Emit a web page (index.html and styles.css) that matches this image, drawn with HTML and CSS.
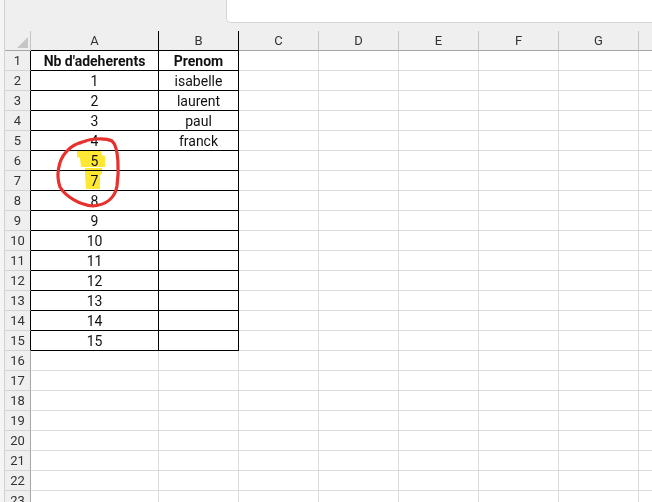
FILE: index.html
```html
<!DOCTYPE html>
<html>
<head>
    <meta charset="UTF-8">
    <meta name="viewport" content="width=device-width, initial-scale=1.0">
    <title>Classeur - Adherents</title>
    <link rel="stylesheet" href="styles.css">
</head>
<body>
    <div class="app">
        <div class="edge"></div>
        <div class="main">
            <div class="topbar">
                <div class="formula"></div>
            </div>

            <table class="sheet">
                <tr class="heads">
                    <td class="corner"></td>
                    <td class="ch colA k">A</td>
                    <td class="ch k">B</td>
                    <td class="ch">C</td>
                    <td class="ch">D</td>
                    <td class="ch">E</td>
                    <td class="ch">F</td>
                    <td class="ch">G</td>
                    <td class="ch"></td>
                </tr>
                <tr><td class="rh k">1</td><td class="k bold">Nb d'adeherents</td><td class="k bold">Prenom</td><td></td><td></td><td></td><td></td><td></td><td></td></tr>
                <tr><td class="rh k">2</td><td class="k">1</td><td class="k">isabelle</td><td></td><td></td><td></td><td></td><td></td><td></td></tr>
                <tr><td class="rh k">3</td><td class="k">2</td><td class="k">laurent</td><td></td><td></td><td></td><td></td><td></td><td></td></tr>
                <tr><td class="rh k">4</td><td class="k">3</td><td class="k">paul</td><td></td><td></td><td></td><td></td><td></td><td></td></tr>
                <tr><td class="rh k">5</td><td class="k">4</td><td class="k">franck</td><td></td><td></td><td></td><td></td><td></td><td></td></tr>
                <tr><td class="rh k">6</td><td class="k">5</td><td class="k"></td><td></td><td></td><td></td><td></td><td></td><td></td></tr>
                <tr><td class="rh k">7</td><td class="k">7</td><td class="k"></td><td></td><td></td><td></td><td></td><td></td><td></td></tr>
                <tr><td class="rh k">8</td><td class="k">8</td><td class="k"></td><td></td><td></td><td></td><td></td><td></td><td></td></tr>
                <tr><td class="rh k">9</td><td class="k">9</td><td class="k"></td><td></td><td></td><td></td><td></td><td></td><td></td></tr>
                <tr><td class="rh k">10</td><td class="k">10</td><td class="k"></td><td></td><td></td><td></td><td></td><td></td><td></td></tr>
                <tr><td class="rh k">11</td><td class="k">11</td><td class="k"></td><td></td><td></td><td></td><td></td><td></td><td></td></tr>
                <tr><td class="rh k">12</td><td class="k">12</td><td class="k"></td><td></td><td></td><td></td><td></td><td></td><td></td></tr>
                <tr><td class="rh k">13</td><td class="k">13</td><td class="k"></td><td></td><td></td><td></td><td></td><td></td><td></td></tr>
                <tr><td class="rh k">14</td><td class="k">14</td><td class="k"></td><td></td><td></td><td></td><td></td><td></td><td></td></tr>
                <tr><td class="rh k">15</td><td class="k">15</td><td class="k"></td><td></td><td></td><td></td><td></td><td></td><td></td></tr>
                <tr><td class="rh">16</td><td></td><td></td><td></td><td></td><td></td><td></td><td></td><td></td></tr>
                <tr><td class="rh">17</td><td></td><td></td><td></td><td></td><td></td><td></td><td></td><td></td></tr>
                <tr><td class="rh">18</td><td></td><td></td><td></td><td></td><td></td><td></td><td></td><td></td></tr>
                <tr><td class="rh">19</td><td></td><td></td><td></td><td></td><td></td><td></td><td></td><td></td></tr>
                <tr><td class="rh">20</td><td></td><td></td><td></td><td></td><td></td><td></td><td></td><td></td></tr>
                <tr><td class="rh">21</td><td></td><td></td><td></td><td></td><td></td><td></td><td></td><td></td></tr>
                <tr><td class="rh">22</td><td></td><td></td><td></td><td></td><td></td><td></td><td></td><td></td></tr>
                <tr><td class="rh">23</td><td></td><td></td><td></td><td></td><td></td><td></td><td></td><td></td></tr>
            </table>
        </div>
    </div>

    <!-- annotations drawn over the sheet -->
    <svg class="markup" width="652" height="502" viewBox="0 0 652 502">
        <g class="marker">
            <polygon points="77,151 101,151 102,155 105,156 105,167 81,167 80,158 77,157"/>
            <polygon points="85,168 102,168 102,174 100,175 100,189 86,189 85,175"/>
        </g>
        <path class="pen" d="M80 143 C88 139, 104 137, 112 141 C119 147, 119 172, 117 186 C115 198, 106 205, 93 206 C80 205, 66 197, 60 187 C56 176, 58 161, 66 152 C71 146, 76 143, 86 141"/>
    </svg>
</body>
</html>
```

FILE: styles.css
```css
body {
    margin: 0;
    width: 652px;
    height: 502px;
    overflow: hidden;
    position: relative;
    font-family: Roboto, "Liberation Sans", sans-serif;
    background-color: #ffffff;
}

.app {
    display: flex;
    height: 100%;
}

.edge {
    width: 4px;
    flex-shrink: 0;
    background-color: #f5f5f5;
    border-right: 1px solid #d2d2d2;
}

.main {
    flex: 1;
    overflow: hidden;
}

.topbar {
    height: 31px;
    background-color: #efefef;
}

.formula {
    margin-left: 221px;
    height: 22px;
    background-color: #ffffff;
    border-left: 1px solid #d4d4d4;
    border-bottom: 1px solid #d4d4d4;
    border-bottom-left-radius: 5px;
}

.sheet {
    border-collapse: separate;
    border-spacing: 0;
    table-layout: fixed;
    width: 714px;
}

.sheet td {
    box-sizing: border-box;
    height: 20px;
    width: 80px;
    padding: 1px 0 0 0;
    border-right: 1px solid #dcdcdc;
    border-bottom: 1px solid #dcdcdc;
    font-size: 14px;
    line-height: 18px;
    color: #111111;
    text-align: center;
    white-space: nowrap;
    overflow: hidden;
}

.sheet .heads td {
    background-color: #efefef;
    color: #333333;
    font-size: 13px;
    border-bottom-color: #a6a6a6;
    border-right-color: #c4c4c4;
}

.sheet .corner {
    width: 26px;
    position: relative;
    border-right-color: #a6a6a6;
}

.corner::after {
    content: "";
    position: absolute;
    right: 2px;
    bottom: 2px;
    width: 11px;
    height: 11px;
    background-color: #c6c6c6;
    clip-path: polygon(100% 0, 100% 100%, 0 100%);
}

.sheet .colA {
    width: 128px;
}

.sheet td.rh {
    background-color: #efefef;
    color: #333333;
    font-size: 13px;
    border-bottom-color: #d4d4d4;
    border-right-color: #a6a6a6;
}

/* cadre noir A1:B15 */
.sheet td.k {
    border-right-color: #000000;
    border-bottom-color: #000000;
}

.sheet .heads td.k {
    border-bottom-color: #000000;
}

.sheet td.rh.k {
    border-bottom-color: #d4d4d4;
    border-right-color: #000000;
}

.bold {
    font-weight: bold;
}

.markup {
    position: absolute;
    top: 0;
    left: 0;
    pointer-events: none;
}

.marker polygon {
    fill: #ffe834;
    mix-blend-mode: multiply;
}

.pen {
    fill: none;
    stroke: #e8302c;
    stroke-width: 3.2;
    stroke-linecap: round;
    stroke-linejoin: round;
}
```
